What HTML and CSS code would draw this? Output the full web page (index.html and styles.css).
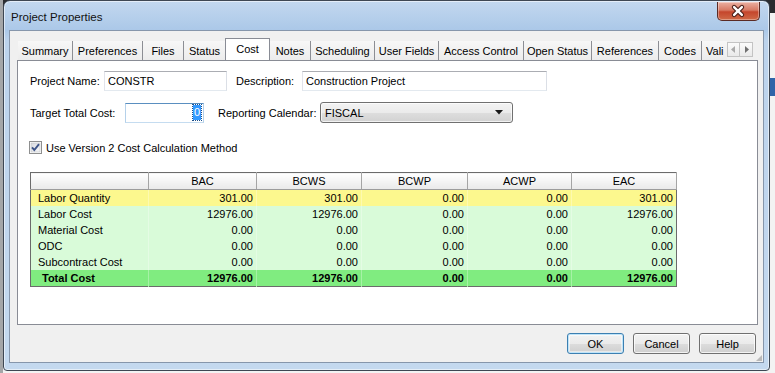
FILE: index.html
```html
<!DOCTYPE html>
<html lang="en">
<head>
    <meta charset="UTF-8">
    <title>Project Properties</title>
    <link rel="stylesheet" href="styles.css">
</head>
<body>
    <div class="window">
        <!-- Title bar -->
        <div class="titlebar">
            <span class="title">Project Properties</span>
            <div class="close-button">
                <svg width="43" height="19" viewBox="0 0 43 19">
                    <path d="M17.5 5 L25.5 13 M25.5 5 L17.5 13" stroke="#4a1f18" stroke-width="4.6" stroke-linecap="round" fill="none"/>
                    <path d="M17.5 5 L25.5 13 M25.5 5 L17.5 13" stroke="#fff" stroke-width="2.4" stroke-linecap="round" fill="none"/>
                </svg>
            </div>
        </div>

        <div class="client">
            <!-- Tabs -->
            <div class="tab-strip">
                <div class="tabs">
                    <div class="tab tab-summary">Summary</div>
                    <div class="tab tab-preferences">Preferences</div>
                    <div class="tab tab-files">Files</div>
                    <div class="tab tab-status">Status</div>
                    <div class="tab tab-cost selected">Cost</div>
                    <div class="tab tab-notes">Notes</div>
                    <div class="tab tab-scheduling">Scheduling</div>
                    <div class="tab tab-userfields">User Fields</div>
                    <div class="tab tab-access">Access Control</div>
                    <div class="tab tab-open">Open Status</div>
                    <div class="tab tab-references">References</div>
                    <div class="tab tab-codes">Codes</div>
                    <div class="tab tab-validation">Vali</div>
                </div>
                <div class="tab-arrows">
                    <span class="arrow">
                        <svg width="11" height="13" viewBox="0 0 11 13"><path d="M3 6.5 L7 3 L7 10 Z" fill="#a9a9a9"/></svg>
                    </span>
                    <span class="arrow">
                        <svg width="11" height="13" viewBox="0 0 11 13"><path d="M8 6.5 L4 3 L4 10 Z" fill="#6f6f6f"/></svg>
                    </span>
                </div>
            </div>

            <!-- Cost page -->
            <div class="panel">
                <div class="form-row row-top">
                    <label class="lbl lbl-name" for="projName">Project Name:</label>
                    <input class="field field-name" id="projName" type="text" value="CONSTR">
                    <label class="lbl lbl-desc" for="projDesc">Description:</label>
                    <input class="field field-desc" id="projDesc" type="text" value="Construction Project">
                </div>

                <div class="form-row row-second">
                    <label class="lbl lbl-target">Target Total Cost:</label>
                    <div class="field field-target focused"><span class="selection">0</span></div>
                    <label class="lbl lbl-calendar">Reporting Calendar:</label>
                    <div class="combo">
                        <span>FISCAL</span>
                        <svg width="8" height="5" viewBox="0 0 8 5"><path d="M0 0 L8 0 L4 4.5 Z" fill="#1a1a1a"/></svg>
                    </div>
                </div>

                <div class="check-row">
                    <span class="checkbox">
                        <svg width="13" height="13" viewBox="0 0 13 13">
                            <defs>
                                <linearGradient id="cbFill" x1="0" y1="0" x2="1" y2="1">
                                    <stop offset="0" stop-color="#d8dadf"/>
                                    <stop offset="1" stop-color="#f7f7f8"/>
                                </linearGradient>
                            </defs>
                            <rect x="0.5" y="0.5" width="12" height="12" fill="#fff" stroke="#8e8f8f"/>
                            <rect x="2" y="2" width="9" height="9" fill="url(#cbFill)" stroke="#c0c2c6" stroke-width="0.6"/>
                            <path d="M3 6.4 L5.3 9 L10 3.2" stroke="#3d5488" stroke-width="1.9" fill="none"/>
                        </svg>
                    </span>
                    <span>Use Version 2 Cost Calculation Method</span>
                </div>

                <table class="cost-table">
                    <colgroup>
                        <col class="col-name">
                        <col class="col-bac">
                        <col class="col-bcws">
                        <col class="col-bcwp">
                        <col class="col-acwp">
                        <col class="col-eac">
                    </colgroup>
                    <thead>
                        <tr>
                            <th></th>
                            <th>BAC</th>
                            <th>BCWS</th>
                            <th>BCWP</th>
                            <th>ACWP</th>
                            <th>EAC</th>
                        </tr>
                    </thead>
                    <tbody>
                        <tr class="qty-row">
                            <td class="name">Labor Quantity</td>
                            <td>301.00</td><td>301.00</td><td>0.00</td><td>0.00</td><td>301.00</td>
                        </tr>
                        <tr class="cost-row">
                            <td class="name">Labor Cost</td>
                            <td>12976.00</td><td>12976.00</td><td>0.00</td><td>0.00</td><td>12976.00</td>
                        </tr>
                        <tr class="cost-row">
                            <td class="name">Material Cost</td>
                            <td>0.00</td><td>0.00</td><td>0.00</td><td>0.00</td><td>0.00</td>
                        </tr>
                        <tr class="cost-row">
                            <td class="name">ODC</td>
                            <td>0.00</td><td>0.00</td><td>0.00</td><td>0.00</td><td>0.00</td>
                        </tr>
                        <tr class="cost-row">
                            <td class="name">Subcontract Cost</td>
                            <td>0.00</td><td>0.00</td><td>0.00</td><td>0.00</td><td>0.00</td>
                        </tr>
                        <tr class="total-row">
                            <td class="name">Total Cost</td>
                            <td>12976.00</td><td>12976.00</td><td>0.00</td><td>0.00</td><td>12976.00</td>
                        </tr>
                    </tbody>
                </table>
            </div>

            <!-- Dialog buttons -->
            <div class="dialog-buttons">
                <button class="btn btn-default" type="button">OK</button>
                <button class="btn" type="button">Cancel</button>
                <button class="btn" type="button">Help</button>
            </div>
            <div class="size-grip"></div>
        </div>
    </div>
</body>
</html>
```

FILE: styles.css
```css
body {
    margin: 0;
    width: 775px;
    height: 373px;
    overflow: hidden;
    font-family: "Liberation Sans", Arial, sans-serif;
    font-size: 11px;
    color: #000;
    background:
        linear-gradient(to right, #a4a6a8 0 3px, transparent 3px),
        linear-gradient(#2a2c30 0 13px, transparent 13px),
        linear-gradient(transparent 78px, #2f64a8 78px 96px, transparent 96px) right top / 5px 100% no-repeat,
        #f3f3f3;
}
.window {
    box-sizing: border-box;
    width: 767px;
    height: 371px;
    margin-left: 3px;
    padding: 0 5px 7px;
    display: flex;
    flex-direction: column;
    border: 1px solid #3e4753;
    border-radius: 7px 7px 4px 4px;
    background: linear-gradient(#c3d8ef, #abc8e8 29px, #bcd3ec 40px, #c4d9ef);
    box-shadow: inset 0 0 0 1px rgba(255, 255, 255, 0.55);
}
.titlebar {
    height: 29px;
    display: flex;
    justify-content: space-between;
    align-items: center;
}
.title {
    padding-left: 2px;
    padding-top: 2px;
    font-size: 11.5px;
    color: #111;
}
.close-button {
    align-self: flex-start;
    margin-top: 1px;
    margin-right: 4px;
    width: 43px;
    height: 19px;
    box-sizing: border-box;
    border: 1px solid #5b2b24;
    border-top: none;
    border-radius: 0 0 5px 5px;
    background: linear-gradient(#eab0a2, #d77a64 45%, #c5462c 55%, #cf6a48);
    box-shadow: inset 0 0 0 1px rgba(255, 255, 255, 0.35);
    display: flex;
}
.close-button svg {
    margin-left: -1px;
}

/* client area */
.client {
    position: relative;
    flex: 1;
    display: flex;
    flex-direction: column;
    padding: 7px 5px 8px 7px;
    border: 1px solid #8696ab;
    background: #f0f0f0;
}
.tab-strip {
    height: 22px;
    display: flex;
}
.tabs {
    flex: 1;
    overflow: hidden;
    display: flex;
    align-items: flex-end;
    padding-left: 1px;
}
.tab {
    flex: none;
    box-sizing: border-box;
    height: 19px;
    display: flex;
    align-items: center;
    justify-content: center;
    white-space: nowrap;
    border-right: 1px solid #8c8e94;
    box-shadow: 1px 0 0 #ffffff;
    background: linear-gradient(#f7f7f7, #ececec);
}
.tab.selected {
    position: relative;
    z-index: 1;
    height: 23px;
    margin-bottom: -1px;
    padding-bottom: 2px;
    border: 1px solid #898c95;
    border-bottom: none;
    background: #fff;
    box-shadow: none;
}
.tab-summary { width: 55px; }
.tab-preferences { width: 70px; }
.tab-files { width: 41px; }
.tab-status { width: 41px; border-right: none; box-shadow: none; }
.tab-cost { width: 45px; }
.tab-notes { width: 41px; }
.tab-scheduling { width: 64px; }
.tab-userfields { width: 64px; }
.tab-access { width: 85px; }
.tab-open { width: 68px; }
.tab-references { width: 67px; }
.tab-codes { width: 43px; }
.tab-validation { width: 26px; justify-content: flex-start; padding-left: 4px; border-right: none; box-shadow: none; }
.tab-arrows {
    display: flex;
    margin: 4px 5px 0 0;
    height: 15px;
}
.arrow {
    width: 13px;
    height: 15px;
    box-sizing: border-box;
    border: 1px solid #c3c3c3;
    background: linear-gradient(#fbfbfb, #e9e9e9);
    display: flex;
    align-items: center;
    justify-content: center;
}
.arrow + .arrow {
    border-left: none;
}

/* page */
.panel {
    flex: 1;
    box-sizing: border-box;
    border: 1px solid #898c95;
    background: #fff;
    padding: 10px 12px 0;
}
.form-row {
    display: flex;
    align-items: center;
}
.row-top {
    height: 20px;
}
.row-second {
    height: 21px;
    margin-top: 11px;
}
.lbl {
    flex: none;
    white-space: nowrap;
}
.lbl-name { width: 74px; }
.lbl-desc { width: 66px; margin-left: 9px; }
.lbl-target { width: 95px; }
.lbl-calendar { width: 102px; margin-left: 14px; }
.field {
    box-sizing: border-box;
    height: 20px;
    margin: 0;
    padding: 0 3px;
    font: inherit;
    color: #000;
    border: 1px solid;
    border-color: #abadb3 #dbdfe6 #e3e9ef #e2e3ea;
    background: #fff;
    outline: none;
}
.field-name { width: 123px; }
.field-desc { width: 245px; }
.field-target {
    width: 79px;
    display: flex;
    align-items: center;
    justify-content: flex-end;
    padding-right: 2px;
}
.field.focused {
    border-color: #5a8fc0 #b5d1ea #c5dcf0 #b5d1ea;
}
.selection {
    background: #3399ff;
    color: #fff;
    line-height: 15px;
    padding: 0 1px;
    outline: 1px dotted #1d4f8a;
}
.combo {
    box-sizing: border-box;
    width: 193px;
    height: 21px;
    border: 1px solid #707070;
    border-radius: 3px;
    background: linear-gradient(#f3f3f3, #ebebeb 50%, #dedede 51%, #d2d2d2);
    box-shadow: inset 0 0 0 1px rgba(255, 255, 255, 0.7);
    display: flex;
    align-items: center;
    justify-content: space-between;
    padding: 0 9px 0 4px;
}
.check-row {
    height: 13px;
    margin-top: 18px;
    display: flex;
    align-items: center;
    gap: 4px;
    margin-left: -1px;
}
.checkbox {
    display: flex;
}

/* cost grid */
.cost-table {
    margin-top: 18px;
    width: 647px;
    table-layout: fixed;
    border-collapse: collapse;
    border: 1px solid #6b6b6b;
}
.col-name { width: 118px; }
.col-bac { width: 108px; }
.col-bcws { width: 105px; }
.col-bcwp { width: 106px; }
.col-acwp { width: 104px; }
.col-eac { width: 105px; }
.cost-table th {
    height: 16px;
    padding: 0;
    font-weight: normal;
    line-height: 15px;
    background: linear-gradient(#ffffff, #f3f3f3 55%, #e9e9e9);
    border-right: 1px solid #a5a5a5;
    border-bottom: 1px solid #9c9c9c;
}
.cost-table td {
    height: 16px;
    padding: 0 3px 0 0;
    line-height: 15px;
    text-align: right;
    white-space: nowrap;
    border-left: 1px solid rgba(255, 255, 255, 0.3);
}
.cost-table td.name {
    text-align: left;
    padding-left: 7px;
    border-left: none;
}
.qty-row td { background: #fcf88e; }
.cost-row td { background: #d9fbd9; }
.total-row td {
    background: #80ec80;
    font-weight: bold;
}
.total-row td.name {
    padding-left: 11px;
}

/* buttons */
.dialog-buttons {
    display: flex;
    justify-content: flex-end;
    gap: 9px;
    margin-top: 8px;
    padding-right: 2px;
}
.btn {
    width: 57px;
    height: 21px;
    padding: 0;
    font: inherit;
    color: #000;
    border: 1px solid #707070;
    border-radius: 3px;
    background: linear-gradient(#f2f2f2, #ebebeb 50%, #dddddd 51%, #cfcfcf);
    box-shadow: inset 0 0 0 1px rgba(255, 255, 255, 0.75);
}
.btn-default {
    border-color: #3c7fb1;
    box-shadow: inset 0 0 0 1px #bfe4f9, inset 0 0 0 2px rgba(255, 255, 255, 0.5);
}
.size-grip {
    position: absolute;
    right: 1px;
    bottom: 1px;
    width: 6px;
    height: 6px;
    background: radial-gradient(circle at 1px 1px, #b9b9b9 1px, transparent 1.2px) 0 0 / 2px 2px;
    clip-path: polygon(100% 0, 100% 100%, 0 100%);
}
```
